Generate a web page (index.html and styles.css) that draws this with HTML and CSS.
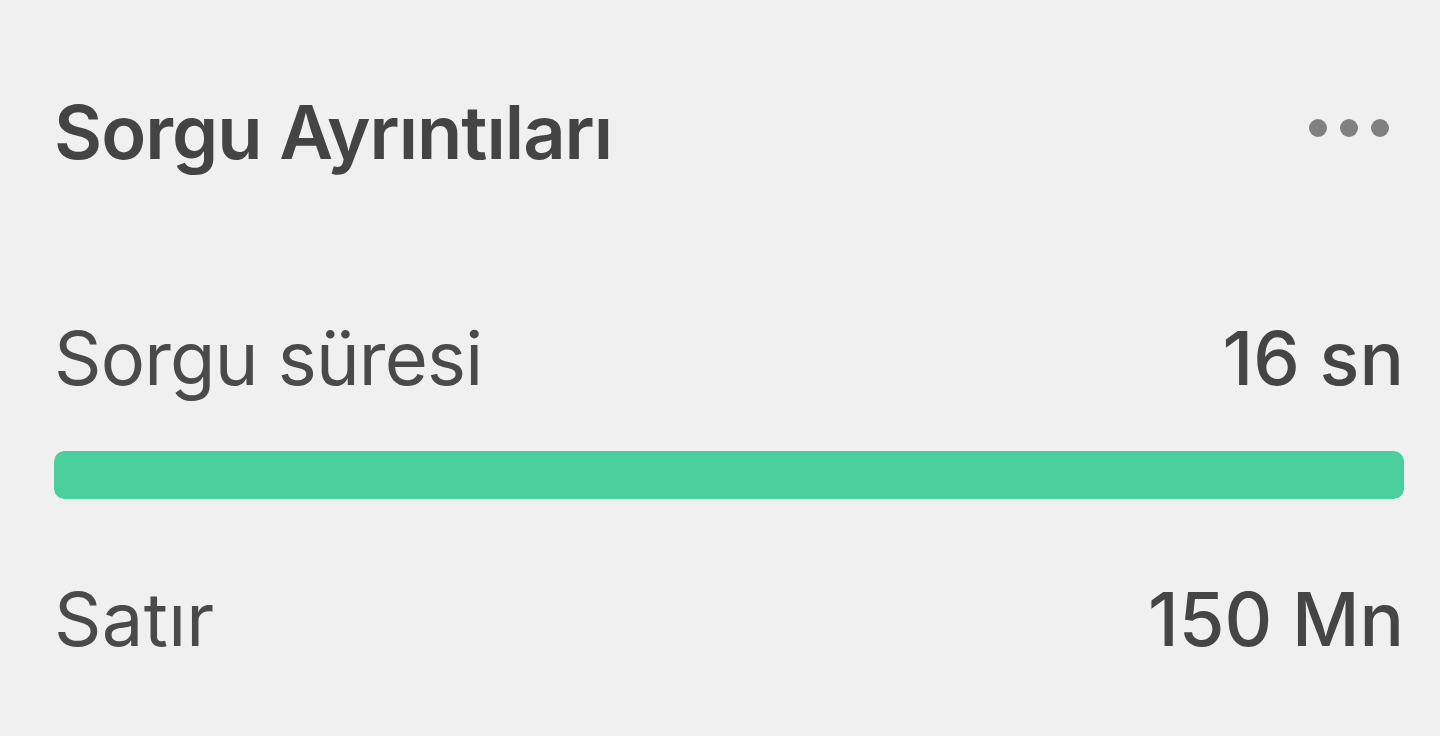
FILE: index.html
```html
<!DOCTYPE html>
<html lang="tr">
<head>
<meta charset="utf-8">
<title>Sorgu Ayrıntıları</title>
<link rel="stylesheet" href="styles.css">
</head>
<body>
<main class="panel">
  <header class="panel-header">
    <h1 class="panel-title">Sorgu Ayrıntıları</h1>
    <div class="more" aria-label="Daha fazla">
      <span class="dot"></span><span class="dot"></span><span class="dot"></span>
    </div>
  </header>
  <div class="row row-first">
    <span class="label">Sorgu süresi</span>
    <span class="value">16 sn</span>
  </div>
  <div class="bar"><div class="bar-fill" style="width:100%"></div></div>
  <div class="row row-second">
    <span class="label label-short">Satır</span>
    <span class="value">150 Mn</span>
  </div>
</main>
</body>
</html>
```
FILE: styles.css
```css
html, body {
  margin: 0;
  padding: 0;
  background: #f0f0f0;
}
body {
  font-family: Inter, "Liberation Sans", sans-serif;
  color: #474747;
}
.panel {
  padding: 87px 36px 0 54px;
}
.panel-header {
  display: flex;
  justify-content: space-between;
  align-items: flex-start;
  height: 90px;
}
.panel-title {
  margin: 0;
  font-size: 74px;
  line-height: 90px;
  font-weight: 600;
  color: #444444;
  letter-spacing: -1px;
}
.more {
  display: flex;
  gap: 13px;
  margin-top: 32px;
  margin-right: 15px;
}
.dot {
  width: 18px;
  height: 18px;
  border-radius: 50%;
  background: #808081;
}
.row {
  display: flex;
  justify-content: space-between;
  font-size: 74px;
  line-height: 90px;
}
.row-first {
  margin-top: 136px;
}
.row-second {
  margin-top: 75px;
}
.label {
  font-weight: 400;
  color: #4a4a4a;
  letter-spacing: -0.8px;
}
.label-short {
  letter-spacing: 0.3px;
}
.value {
  font-weight: 500;
  color: #454545;
}
.bar {
  margin-top: 48px;
  height: 48px;
  border-radius: 10px;
  background: #e2e2e2;
  overflow: hidden;
}
.bar-fill {
  height: 100%;
  background: #4bcf9c;
  border-radius: 10px;
}
```
